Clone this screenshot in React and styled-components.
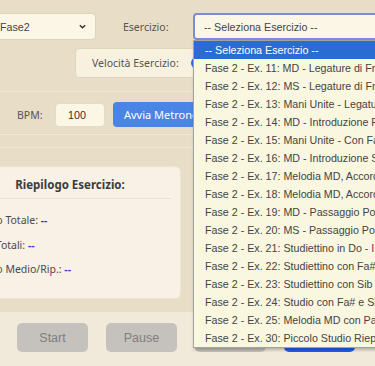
import React from 'react'
import styled, { createGlobalStyle } from 'styled-components'

const GlobalStyle = createGlobalStyle`
  html, body {
    margin: 0;
    padding: 0;
    background: #f1eadb;
    overflow: hidden;
  }
  body {
    font-family: 'Noto Sans', 'Open Sans', sans-serif;
    color: #4a4a4a;
  }
`

const Shell = styled.div`
  position: relative;
  width: 460px;
  margin-left: -60px;
`

const TopPanel = styled.div`
  background: #e8ddc6;
`

const SelectRow = styled.div`
  display: flex;
  align-items: center;
  padding: 13px 0 0 50px;
`

const SelectBox = styled.div`
  box-sizing: border-box;
  flex-shrink: 0;
  display: flex;
  align-items: center;
  justify-content: space-between;
  width: ${(p) => p.$width}px;
  height: 27px;
  padding: 0 8px 0 9px;
  background: #fbf6e5;
  border: ${(p) => (p.$focused ? '2px solid #7d8cd6' : '1px solid #ddd2bb')};
  border-radius: 4px;
  font-family: 'Liberation Sans', Arial, sans-serif;
  font-size: 10.7px;
  color: #444;
  white-space: nowrap;
`

const Chevron = styled.svg`
  width: 9px;
  height: 9px;
`

const FieldLabel = styled.span`
  flex-shrink: 0;
  width: ${(p) => p.$width}px;
  margin-left: ${(p) => p.$offset || 0}px;
  font-size: 10.5px;
  color: #555;
  white-space: nowrap;
`

const SpeedRow = styled.div`
  padding: 8px 0 0 135px;
`

const SpeedBox = styled.div`
  box-sizing: border-box;
  display: flex;
  align-items: center;
  width: 220px;
  height: 30px;
  padding-left: 16px;
  background: #f8f1df;
  border: 1px solid #e0d5bd;
  border-radius: 4px;
  font-size: 10.5px;
  color: #555;
  white-space: nowrap;
`

const Slider = styled.div`
  flex-shrink: 0;
  display: flex;
  align-items: center;
  margin-left: 12px;
  width: 90px;
  height: 4px;
  background: #cfcfcf;
  border-radius: 2px;
`

const Thumb = styled.span`
  width: 12px;
  height: 12px;
  border-radius: 50%;
  background: #2e6be6;
`

const MetroRow = styled.div`
  display: flex;
  align-items: center;
  margin-top: 13px;
  padding: 10px 0 7px 77px;
  border-top: 1px solid #f1e9d7;
`

const NumberInput = styled.div`
  box-sizing: border-box;
  flex-shrink: 0;
  display: flex;
  align-items: center;
  width: 50px;
  height: 24px;
  padding-left: 12px;
  background: #fcf6e4;
  border: 1px solid #e8d8c4;
  border-radius: 4px;
  font-family: 'Liberation Sans', Arial, sans-serif;
  font-size: 10.7px;
  color: #333;
`

const BlueButton = styled.button`
  flex-shrink: 0;
  height: 25px;
  width: 150px;
  margin-left: 8px;
  padding: 0 11px;
  text-align: left;
  border: none;
  border-radius: 4px;
  background: #4a84e4;
  color: #fff;
  font-family: 'Noto Sans', sans-serif;
  font-size: 11px;
  white-space: nowrap;
`

const Strip = styled.div`
  height: 12px;
  border-top: 1px solid #f1e9d7;
  border-bottom: 1px solid #f1e9d7;
`

const SummarySection = styled.div`
  padding: 18px 0 13px 22px;
`

const Card = styled.div`
  box-sizing: border-box;
  width: 219px;
  height: 133px;
  padding: 9px 9px 0 6px;
  background: #f9f0e6;
  border: 1px solid #efe3d2;
  border-radius: 6px;
`

const CardTitle = styled.div`
  text-align: center;
  font-weight: 700;
  font-size: 11.5px;
  line-height: 18px;
  color: #3c3c3c;
  padding-bottom: 4px;
  border-bottom: 1px solid #eadfd0;
`

const StatList = styled.div`
  padding-top: 9px;
`

const Stat = styled.div`
  font-size: 10.5px;
  line-height: 24.5px;
  color: #4a4a4a;
  white-space: nowrap;
`

const StatValue = styled.span`
  color: #3b3bd0;
  font-weight: 700;
`

const Footer = styled.div`
  display: flex;
  gap: 18px;
  padding: 11px 0 0 77px;
`

const ActionButton = styled.button`
  flex-shrink: 0;
  width: 71px;
  height: 29px;
  border: none;
  border-radius: 5px;
  background: ${(p) => (p.$primary ? '#1f5ef2' : '#c5c2bd')};
  color: ${(p) => (p.$primary ? '#fff' : '#7f7f7f')};
  font-family: 'Liberation Sans', Arial, sans-serif;
  font-size: 12.5px;
`

const Dropdown = styled.ul`
  position: absolute;
  top: 40px;
  left: 253px;
  width: 260px;
  margin: 0;
  padding: 0;
  list-style: none;
  background: #f9f7df;
  border: 1px solid #a3a39a;
  box-shadow: 1px 2px 3px rgba(0, 0, 0, 0.25);
  font-family: 'Liberation Sans', Arial, sans-serif;
  font-size: 10.7px;
`

const Option = styled.li`
  height: 18px;
  line-height: 18px;
  padding-left: 11px;
  white-space: nowrap;
  background: ${(p) => (p.$active ? '#2b6cd4' : 'transparent')};
  color: ${(p) => (p.$active ? '#fff' : '#444')};
`

const exercises = [
  'Fase 2 - Ex. 11: MD - Legature di Frase',
  'Fase 2 - Ex. 12: MS - Legature di Frase',
  'Fase 2 - Ex. 13: Mani Unite - Legature',
  'Fase 2 - Ex. 14: MD - Introduzione Fa#',
  'Fase 2 - Ex. 15: Mani Unite - Con Fa#',
  'Fase 2 - Ex. 16: MD - Introduzione Sib',
  'Fase 2 - Ex. 17: Melodia MD, Accordi MS',
  'Fase 2 - Ex. 18: Melodia MD, Accordi MS',
  'Fase 2 - Ex. 19: MD - Passaggio Pollice',
  'Fase 2 - Ex. 20: MS - Passaggio Pollice',
  'Fase 2 - Ex. 21: Studiettino in Do - I',
  'Fase 2 - Ex. 22: Studiettino con Fa#',
  'Fase 2 - Ex. 23: Studiettino con Sib',
  'Fase 2 - Ex. 24: Studio con Fa# e Sib',
  'Fase 2 - Ex. 25: Melodia MD con Pausa',
  'Fase 2 - Ex. 30: Piccolo Studio Riepilogo',
]

export default function App() {
  return (
    <Shell>
      <GlobalStyle />
      <TopPanel>
        <SelectRow>
          <SelectBox $width={106}>
            <span>Fase2</span>
            <Chevron viewBox="0 0 10 10">
              <path d="M2 3.5 L5 6.5 L8 3.5" fill="none" stroke="#333" strokeWidth="1.6" />
            </Chevron>
          </SelectBox>
          <FieldLabel $width={70} $offset={27}>Esercizio:</FieldLabel>
          <SelectBox $width={260} $focused>
            <span>-- Seleziona Esercizio --</span>
          </SelectBox>
        </SelectRow>
        <SpeedRow>
          <SpeedBox>
            <span>Velocità Esercizio:</span>
            <Slider>
              <Thumb />
            </Slider>
          </SpeedBox>
        </SpeedRow>
        <MetroRow>
          <FieldLabel $width={38}>BPM:</FieldLabel>
          <NumberInput>100</NumberInput>
          <BlueButton>Avvia Metronomo</BlueButton>
        </MetroRow>
        <Strip />
        <SummarySection>
          <Card>
            <CardTitle>Riepilogo Esercizio:</CardTitle>
            <StatList>
              <Stat>Tempo Totale: <StatValue>--</StatValue></Stat>
              <Stat>Note Totali: <StatValue>--</StatValue></Stat>
              <Stat>Tempo Medio/Rip.: <StatValue>--</StatValue></Stat>
            </StatList>
          </Card>
        </SummarySection>
      </TopPanel>
      <Footer>
        <ActionButton>Start</ActionButton>
        <ActionButton>Pause</ActionButton>
        <ActionButton>Stop</ActionButton>
        <ActionButton $primary>Reset</ActionButton>
      </Footer>
      <Dropdown>
        <Option $active>-- Seleziona Esercizio --</Option>
        {exercises.map((ex) => (
          <Option key={ex}>{ex}</Option>
        ))}
      </Dropdown>
    </Shell>
  )
}
